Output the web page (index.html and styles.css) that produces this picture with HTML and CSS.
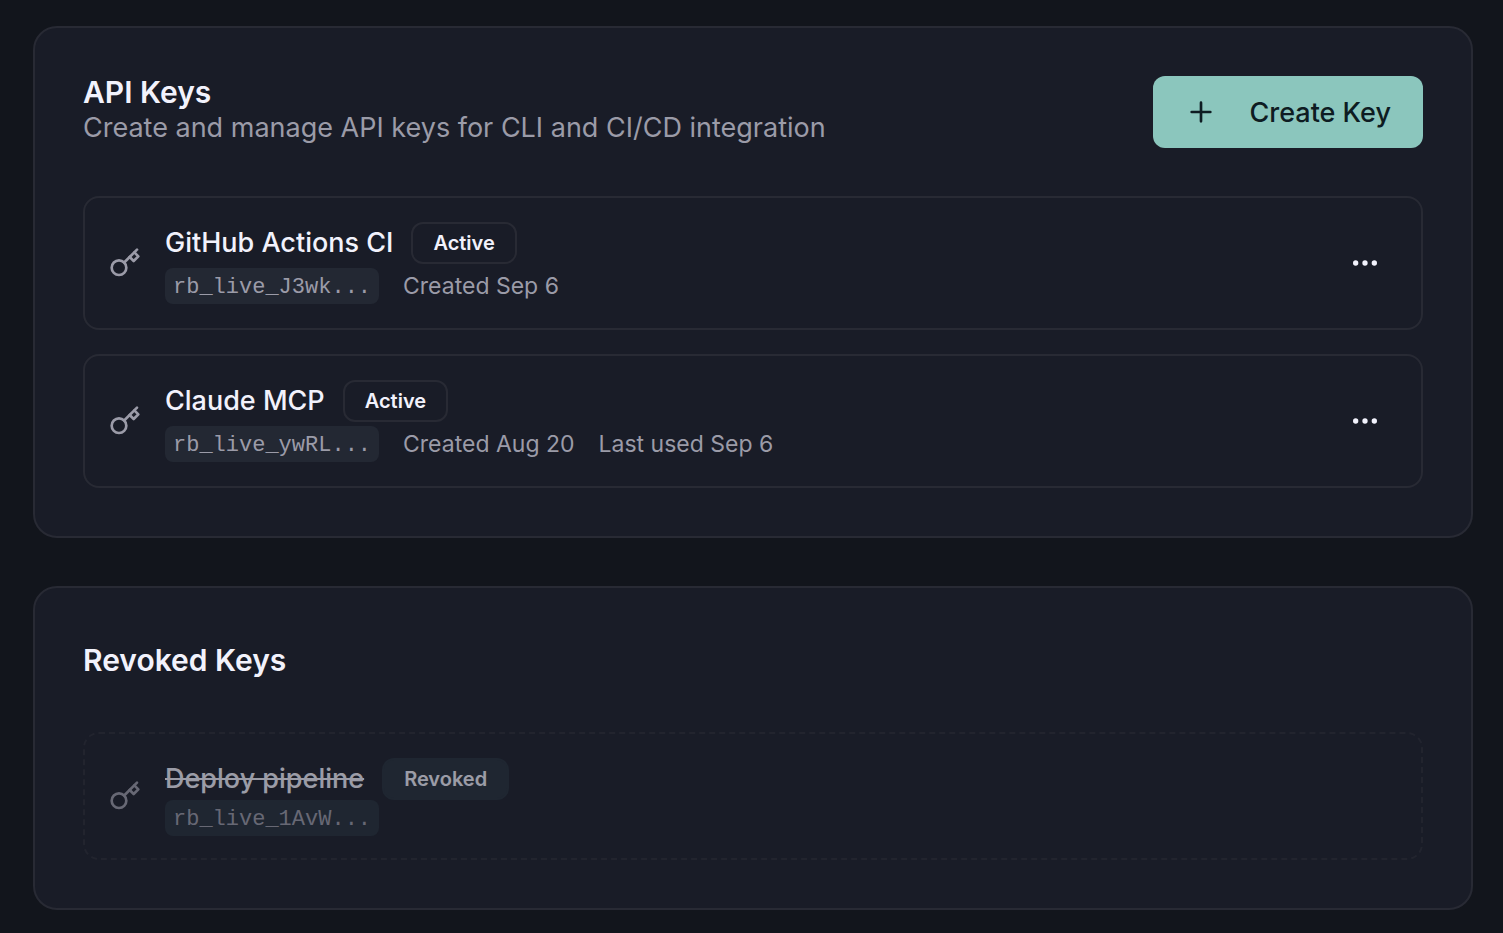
FILE: index.html
```html
<!DOCTYPE html>
<html lang="en">
<head>
<meta charset="utf-8">
<title>API Keys</title>
<link rel="stylesheet" href="styles.css">
</head>
<body>
<svg class="sprite" aria-hidden="true">
  <symbol id="key" viewBox="0 0 24 24"><circle cx="7.5" cy="15.5" r="5.5"/><path d="m21 2-9.6 9.6"/><path d="m15.5 7.5 3 3L22 7l-3-3"/></symbol>
  <symbol id="dots" viewBox="0 0 24 24"><circle cx="5" cy="12" r="1"/><circle cx="12" cy="12" r="1"/><circle cx="19" cy="12" r="1"/></symbol>
  <symbol id="plus" viewBox="0 0 24 24"><path d="M5 12h14M12 5v14"/></symbol>
</svg>
<main class="page">
  <section class="card">
    <header class="card-header">
      <div>
        <h2 class="card-title">API Keys</h2>
        <p class="card-description">Create and manage API keys for CLI and CI/CD integration</p>
      </div>
      <button class="create-button" type="button"><svg class="icon"><use href="#plus"/></svg>Create Key</button>
    </header>
    <ul class="key-list">
      <li class="key-row">
        <svg class="icon key-icon"><use href="#key"/></svg>
        <div class="key-info">
          <div class="key-heading"><h3 class="key-name">GitHub Actions CI</h3><span class="badge">Active</span></div>
          <div class="key-details"><code class="key-prefix">rb_live_J3wk...</code><span>Created Sep 6</span></div>
        </div>
        <button class="menu-button" type="button" aria-label="Actions for GitHub Actions CI"><svg class="icon"><use href="#dots"/></svg></button>
      </li>
      <li class="key-row">
        <svg class="icon key-icon"><use href="#key"/></svg>
        <div class="key-info">
          <div class="key-heading"><h3 class="key-name">Claude MCP</h3><span class="badge">Active</span></div>
          <div class="key-details"><code class="key-prefix">rb_live_ywRL...</code><span>Created Aug 20</span><span>Last used Sep 6</span></div>
        </div>
        <button class="menu-button" type="button" aria-label="Actions for Claude MCP"><svg class="icon"><use href="#dots"/></svg></button>
      </li>
    </ul>
  </section>
  <section class="card">
    <header class="card-header">
      <h2 class="card-title card-title-single">Revoked Keys</h2>
    </header>
    <ul class="key-list">
      <li class="key-row revoked">
        <svg class="icon key-icon"><use href="#key"/></svg>
        <div class="key-info">
          <div class="key-heading"><h3 class="key-name">Deploy pipeline</h3><span class="badge badge-muted">Revoked</span></div>
          <div class="key-prefix-line"><code class="key-prefix">rb_live_1AvW...</code></div>
        </div>
      </li>
    </ul>
  </section>
</main>
</body>
</html>
```
FILE: styles.css
```css
* { box-sizing: border-box; }
body {
  margin: 0;
  background: #12151c;
  color: #f2f2fc;
  font-family: Inter, "Liberation Sans", sans-serif;
  font-size: 28px;
}
h2, h3, p, ul { margin: 0; padding: 0; }
button { font: inherit; border: 0; cursor: pointer; }
.sprite { display: none; }
.icon {
  width: 32px;
  height: 32px;
  flex: none;
  fill: none;
  stroke: currentColor;
  stroke-width: 2;
  stroke-linecap: round;
  stroke-linejoin: round;
}
.page {
  display: flex;
  flex-direction: column;
  gap: 48px;
  padding: 26px 30px 23px 33px;
}
.card {
  display: flex;
  flex-direction: column;
  gap: 48px;
  padding: 48px;
  border: 2px solid #282a34;
  border-radius: 24px;
  background: #191c27;
}
.card-header {
  display: flex;
  align-items: center;
  justify-content: space-between;
  gap: 32px;
}
.card-title { font-size: 30px; font-weight: 600; line-height: 32px; }
.card-title-single { line-height: 48px; }
.card-description { color: #9b9ba8; font-size: 27px; line-height: 40px; }
.create-button {
  display: flex;
  align-items: center;
  gap: 32px;
  height: 72px;
  padding: 0 32px;
  border-radius: 12px;
  background: #8bc6bd;
  color: #0e1c22;
  font-size: 27px;
  font-weight: 500;
  white-space: nowrap;
}
.key-list { display: flex; flex-direction: column; gap: 24px; list-style: none; }
.key-row {
  display: flex;
  align-items: center;
  gap: 24px;
  padding: 24px;
  border: 2px solid #282a34;
  border-radius: 16px;
}
.key-icon { color: #9b9ba8; }
.key-info { display: flex; flex: 1; flex-direction: column; gap: 4px; }
.key-heading { display: flex; align-items: center; gap: 18px; }
.key-name { font-size: 27px; font-weight: 500; line-height: 42px; }
.badge {
  padding: 3px 20px;
  border: 2px solid #282a34;
  border-radius: 12px;
  font-size: 20px;
  font-weight: 600;
  line-height: 32px;
}
.badge-muted { border-color: #232d38; background: #232d38; }
.key-details {
  display: flex;
  align-items: center;
  gap: 24px;
  color: #9b9ba8;
  font-size: 23px;
  line-height: 32px;
}
.key-prefix {
  padding: 4px 8px 0;
  border-radius: 8px;
  background: #232833;
  color: #9b9ba8;
  font-family: "Liberation Mono", monospace;
  font-size: 22px;
  line-height: 32px;
}
.menu-button {
  display: grid;
  place-items: center;
  width: 64px;
  height: 64px;
  padding: 0;
  background: transparent;
  color: #f2f2fc;
}
.revoked { border-style: dashed; opacity: 0.6; }
.revoked .key-info { gap: 0; }
.revoked .key-name { text-decoration: line-through; }
.revoked .key-prefix { background: #232d38; }
.key-prefix-line { display: flex; align-items: flex-start; height: 34px; }
```
